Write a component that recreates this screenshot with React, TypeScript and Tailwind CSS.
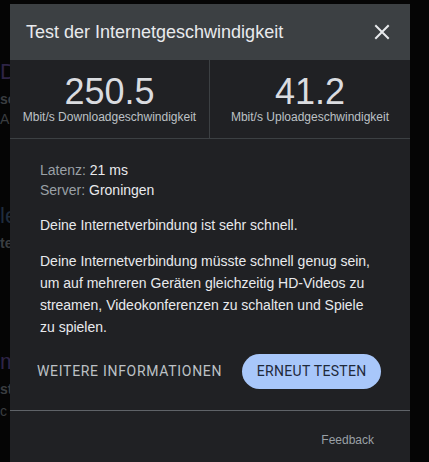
import React from "react";

export default function App() {
  return (
    <div
      className="relative w-[429px] h-[462px] overflow-hidden bg-[#050505]"
      style={{ fontFamily: '"Liberation Sans", Arial, sans-serif' }}
    >
      {/* dimmed page behind the dialog */}
      <div className="flex flex-col w-[10px] overflow-hidden whitespace-nowrap pt-[59px] text-[#3a3d40]">
        <div className="text-[22px] leading-[26px] text-[#2e2445]">D</div>
        <div className="text-[14px] leading-[20px] font-bold mt-[4px]">se</div>
        <div className="text-[14px] leading-[20px]">A</div>
        <div className="text-[22px] leading-[26px] text-[#1f2c3d] mt-[74px]">le</div>
        <div className="text-[14px] leading-[20px] font-bold mt-[4px]">te</div>
        <div className="text-[22px] leading-[26px] text-[#2e2445] mt-[96px]">m</div>
        <div className="text-[14px] leading-[20px] font-bold mt-[4px]">st</div>
        <div className="text-[14px] leading-[20px] mt-[2px]">c</div>
      </div>

      {/* dialog */}
      <div className="absolute left-[10px] top-[4px] w-[400px] h-[480px] bg-[#202124] flex flex-col">
        <div className="h-[56px] bg-[#3c4043] flex items-center justify-between pl-[16px] pr-[20px]">
          <span className="text-[18px] text-[#e8eaed]">Test der Internetgeschwindigkeit</span>
          <svg width="16" height="16" viewBox="0 0 16 16" className="text-[#e8eaed]">
            <path d="M2 2 L14 14 M14 2 L2 14" stroke="currentColor" strokeWidth="2" strokeLinecap="square" />
          </svg>
        </div>

        <div className="grid grid-cols-[199px_1px_200px] h-[79px] border-b border-[#3c4043]">
          <div className="flex flex-col items-center pt-[14px]">
            <span className="text-[36px] leading-[36px] text-[#dadce0]">250.5</span>
            <span className="text-[12px] leading-[14px] text-[#bdc1c6]">Mbit/s Downloadgeschwindigkeit</span>
          </div>
          <div className="bg-[#3c4043]" />
          <div className="flex flex-col items-center pt-[14px]">
            <span className="text-[36px] leading-[36px] text-[#dadce0]">41.2</span>
            <span className="text-[12px] leading-[14px] text-[#bdc1c6]">Mbit/s Uploadgeschwindigkeit</span>
          </div>
        </div>

        <div className="px-[30px] pt-[21px] text-[14px] text-[#e8eaed]">
          <div className="leading-[20px]">
            <span className="text-[#9aa0a6]">Latenz:</span> 21 ms
          </div>
          <div className="leading-[20px]">
            <span className="text-[#9aa0a6]">Server:</span> Groningen
          </div>
          <p className="leading-[22px] mt-[14px]">Deine Internetverbindung ist sehr schnell.</p>
          <p className="leading-[22px] mt-[14px]">
            Deine Internetverbindung müsste schnell genug sein, um auf mehreren Geräten gleichzeitig HD-Videos zu
            streamen, Videokonferenzen zu schalten und Spiele zu spielen.
          </p>
        </div>

        <div
          className="flex items-center pl-[27px] mt-[16px] h-[35px]"
          style={{ fontFamily: 'Roboto, "Liberation Sans", sans-serif' }}
        >
          <span className="text-[14px] text-[#bdc1c6] tracking-[0.7px]">WEITERE INFORMATIONEN</span>
          <span className="ml-[20px] h-[35px] w-[139px] rounded-full bg-[#a8c7fa] flex items-center justify-center text-[14px] text-[#1f2a3a] tracking-[0.3px]">
            ERNEUT TESTEN
          </span>
        </div>

        <div className="mt-[21px] border-t border-[#5f6368]" />

        <div className="flex justify-end pr-[36px] pt-[20px]">
          <span className="text-[12px] text-[#9aa0a6]">Feedback</span>
        </div>
      </div>
    </div>
  );
}
